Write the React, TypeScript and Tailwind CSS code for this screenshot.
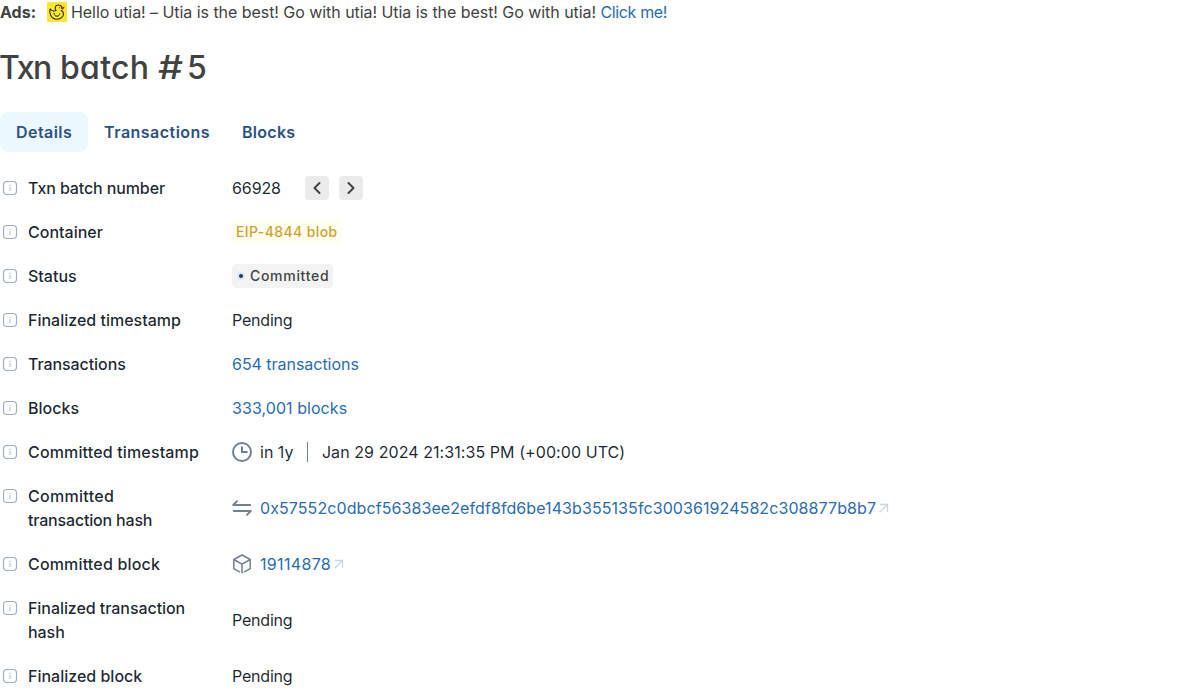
import React from "react";

const InfoIcon = () => (
  <svg viewBox="0 0 20 20" className="h-5 w-5 shrink-0" fill="none" stroke="#a0aec0">
    <rect x="3.500" y="3.500" width="13" height="13" rx="3.500" strokeWidth="1.200" />
    <path d="M10 9v4M10 6.800v1.200" strokeWidth="1.200" opacity=".7" />
  </svg>
);

const Duck = () => (
  <svg viewBox="0 0 20 20" className="ml-[11px] mr-1 h-5 w-5 shrink-0" fill="none" stroke="#2b2616" strokeWidth="1.100" strokeLinecap="round" strokeLinejoin="round">
    <rect width="20" height="20" fill="#f9e92c" stroke="none" />
    <path d="M14.800 6.600C14.800 4.600 13.400 3 11.500 3S8.200 4.500 8.200 6.400c0 1 .4 1.600.9 2.100-2 .9-4.800.3-6-1.600-.7 2.100-.4 4.500.7 6.600 1.200 2.300 3.200 3.700 6 3.700 3.900 0 6.700-2.300 6.700-5.200 0-1.700-.8-2.700-2.300-3.400" />
    <path d="M7 11.200c.1 2 1.300 3 2.900 3 1.700 0 2.800-1 3-2.500" strokeWidth="1" />
    <path d="M14.500 5.400l2.700-.4-1.500 2.500z" fill="#a63b1d" stroke="#8c351d" strokeWidth=".8" />
    <circle cx="12.500" cy="5.800" r=".5" fill="#2b2616" stroke="none" />
  </svg>
);

const ClockIcon = () => (
  <svg viewBox="0 0 20 20" className="mr-2 h-5 w-5 shrink-0" fill="none" stroke="#718096" strokeWidth="2">
    <circle cx="10" cy="10" r="9" />
    <path d="M10 4.500V10h5.500" />
  </svg>
);

const SwapIcon = () => (
  <svg viewBox="0 0 20 20" className="mr-2 h-5 w-5 shrink-0" fill="none" stroke="#718096" strokeWidth="1.900" strokeLinecap="round" strokeLinejoin="round">
    <path d="M18.200 7H1.200l3.800-3.800M1.800 13h17l-3.800 3.800" />
  </svg>
);

const BlockIcon = () => (
  <svg viewBox="0 0 20 20" className="mr-2 h-5 w-5 shrink-0" fill="none" stroke="#718096" strokeWidth="1.500" strokeLinejoin="round">
    <path d="M8 18.200L1.800 14.700V5.500L10 1l8.200 4.500v9.200L12 18.200M1.800 5.500L10 10.200l8.200-4.700M10 10.200V19.300" />
  </svg>
);

const ExternalIcon = () => (
  <svg viewBox="0 0 12 12" className="ml-[2px] h-3 w-3 shrink-0" fill="none" stroke="#cbd5e0" strokeWidth="1.300">
    <path d="M2 2.500h7.500V10M9.500 2.500L1.700 10.200" />
  </svg>
);

const Arrow = ({ d }: { d: string }) => (
  <button className="flex h-6 w-6 items-center justify-center rounded bg-[#ebebeb]">
    <svg viewBox="0 0 24 24" className="h-6 w-6" fill="none" stroke="#414342" strokeWidth="2" strokeLinecap="round" strokeLinejoin="round">
      <path d={d} />
    </svg>
  </button>
);

const Row = ({ label, className = "", children }: { label: React.ReactNode; className?: string; children: React.ReactNode }) => (
  <div className="flex">
    <div className="flex w-[232px] shrink-0 items-start">
      <span className="flex h-6 items-center"><InfoIcon /></span>
      <span className={`ml-2 w-[174px] font-medium ${className}`}>{label}</span>
    </div>
    <div className="flex items-center whitespace-nowrap">{children}</div>
  </div>
);

const Link = ({ className = "", children }: { className?: string; children: React.ReactNode }) => (
  <a href="#" className={`text-[#2b6cb0] ${className}`}>{children}</a>
);

const Pending = () => <span className="tracking-[-0.2px]">Pending</span>;

export default function App() {
  return (
    <main className="h-[692px] overflow-hidden bg-white font-['Inter',sans-serif] text-base text-[#101828]/95">
      <div className="flex h-6 items-center whitespace-nowrap text-[#414342]">
        <span className="font-bold">Ads:</span>
        <Duck />
        <span className="tracking-[-0.05px]">Hello utia! – Utia is the best! Go with utia! Utia is the best! Go with utia! <Link className="tracking-[-0.37px]">Click me!</Link></span>
      </div>
      <h1 className="mt-6 -ml-px flex h-10 whitespace-nowrap text-[32px] leading-10 font-medium text-[#414342] [font-feature-settings:'cv11']">
        <span className="w-[61px] tracking-[-1.500px]">Txn </span>
        <span className="w-[98px] tracking-[0.300px]">batch </span>
        <span className="w-[30px] origin-left scale-x-[1.230]">#</span>
        <span className="-ml-px">5</span>
      </h1>
      <nav className="mt-6 flex h-10 font-semibold text-[#2c5282]">
        <button className="rounded-lg bg-[#ebf8ff] px-4 tracking-[0.43px]">Details</button>
        <button className="px-4 tracking-[0.47px]">Transactions</button>
        <button className="px-4 tracking-[0.28px]">Blocks</button>
      </nav>
      <section className="mt-6 flex flex-col gap-5">
        <Row label="Txn batch number" className="tracking-[-0.12px]">
          <span className="w-[73px] tracking-[-0.1px]">66928</span>
          <span className="flex gap-[10px]">
            <Arrow d="M14.500 7L9.500 12l5 5" />
            <Arrow d="M9.500 7l5 5-5 5" />
          </span>
        </Row>
        <Row label="Container">
          <span className="flex h-6 items-center rounded bg-[#fffff0] px-1 text-sm font-medium tracking-[0.38px] text-[#d69e2e]">EIP-4844 blob</span>
        </Row>
        <Row label="Status">
          <span className="flex h-6 items-center rounded bg-[#f3f3f3] pr-[3.500px] pl-[5px] text-sm font-medium tracking-[0.7px] text-[#414342]">
            <span className="mr-[5px] flex h-2 w-2 items-center justify-center rounded-full bg-[#dce8f5]"><span className="h-1 w-1 rounded-full bg-[#2d3748]" /></span>
            Committed
          </span>
        </Row>
        <Row label="Finalized timestamp"><Pending /></Row>
        <Row label="Transactions" className="tracking-[-0.08px]"><Link className="tracking-[-0.03px]">654 transactions</Link></Row>
        <Row label="Blocks"><Link className="tracking-[0.06px]">333,001 blocks</Link></Row>
        <Row label="Committed timestamp" className="tracking-[0.15px]">
          <ClockIcon />
          <span>in 1y</span>
          <span className="mr-[13.5px] ml-[14px] h-5 w-px bg-[#718096]" />
          <span className="tracking-[0.07px]">Jan 29 2024 21:31:35 PM (+00:00 UTC)</span>
        </Row>
        <Row label={<><span className="tracking-[0.3px]">Committed</span> <span className="tracking-[-0.18px]">transaction hash</span></>}>
          <SwapIcon />
          <Link className="tracking-[0.085px]">0x57552c0dbcf56383ee2efdf8fd6be143b355135fc300361924582c308877b8b7</Link>
          <ExternalIcon />
        </Row>
        <Row label="Committed block" className="tracking-[0.17px]">
          <BlockIcon />
          <Link className="tracking-[0.33px]">19114878</Link>
          <ExternalIcon />
        </Row>
        <Row label="Finalized transaction hash" className="tracking-[-0.06px]"><Pending /></Row>
        <Row label="Finalized block"><Pending /></Row>
      </section>
    </main>
  );
}
